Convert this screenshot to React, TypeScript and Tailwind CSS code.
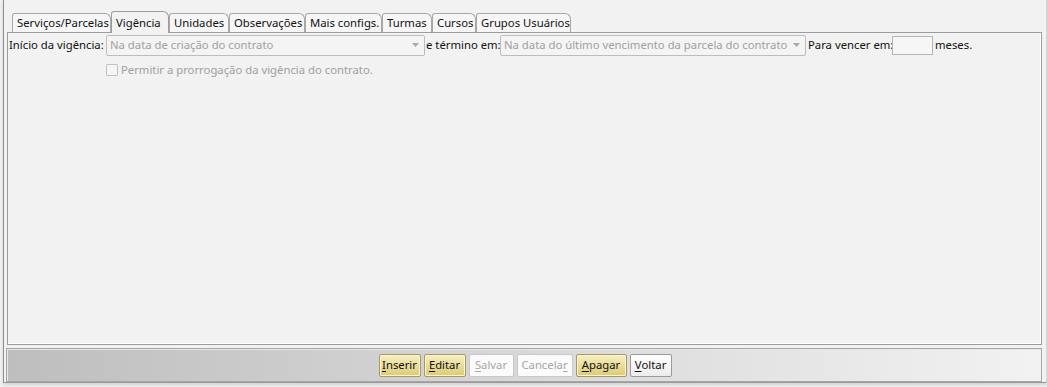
const tabs = [
  { t: "Serviços/Parcelas", w: "w-[99px]" },
  { t: "Vigência", w: "w-[58px]" },
  { t: "Unidades", w: "w-[60px]" },
  { t: "Observações", w: "w-[76px]" },
  { t: "Mais configs.", w: "w-[77px]" },
  { t: "Turmas", w: "w-[50px]" },
  { t: "Cursos", w: "w-[44px]" },
  { t: "Grupos Usuários", w: "w-[95px]" },
];

function Caret() {
  return (
    <svg width="7" height="4" viewBox="0 0 7 4" className="shrink-0">
      <path d="M0 0 L7 0 L3.5 4 Z" fill="#a8a8a8" />
    </svg>
  );
}

function Btn({ u, rest, pre = "", enabled, w }: { u: string; rest: string; pre?: string; enabled: boolean; w: string }) {
  return (
    <button
      className={
        (enabled
          ? "border-[#a8995a] bg-gradient-to-b from-[#f7efc0] to-[#dccb74] text-[#111111] shadow-[inset_0_0_0_1px_#fbf5d8]"
          : "border-[#c8c8c8] bg-[#fbfbfb] text-[#a6a6a6]") +
        " flex h-[23px] items-center justify-center rounded-[2px] border " +
        w
      }
    >
      {pre}
      <span className="underline underline-offset-2">{u}</span>
      {rest}
    </button>
  );
}

export default function App() {
  return (
    <div className="h-[387px] w-[1047px] bg-[#f0f0f0] font-['Noto_Sans',sans-serif] text-[11.3px] text-[#111111]">
      <div className="ml-[3px] flex h-[383px] flex-col border-b border-l border-r border-b-[#9a9a9a] border-l-[#8e8e8e] border-r-[#d6d6d6] bg-[#f2f2f2] pl-[3px] pr-[4px] shadow-[0_2px_3px_rgba(0,0,0,0.12)]">
        {/* tabs */}
        <div className="mt-[11px] flex h-[21px] items-end pl-[5px]">
          {tabs.map((tab, i) => (
            <div
              key={tab.t}
              className={
                (i === 1
                  ? "relative z-10 -mb-px h-[22px] border-[#9c9c9c] bg-[#f2f2f2]"
                  : "h-[19px] border-[#a8a8a8] bg-[#f6f6f6]") +
                " flex shrink-0 items-center whitespace-nowrap rounded-tl-[3px] rounded-tr-[6px] border border-b-0 pl-[4px] leading-none " +
                tab.w
              }
            >
              {tab.t}
            </div>
          ))}
        </div>
        {/* panel */}
        <div className="flex h-[313px] flex-col border border-[#9c9c9c] bg-[#f2f2f2] pl-[1px] pt-[2px] shadow-[inset_-1px_-1px_0_#ffffff]">
          <div className="flex h-[20px] items-center whitespace-nowrap">
            <span className="w-[97px] shrink-0">Início da vigência:</span>
            <div className="flex h-[21px] w-[319px] shrink-0 items-center justify-between rounded-[2px] border border-[#bdbdbd] bg-[#f4f4f4] pl-[3px] pr-[5px] text-[#a0a0a0]">
              <span>Na data de criação do contrato</span>
              <Caret />
            </div>
            <span className="w-[75px] shrink-0 pl-[1px]">e término em:</span>
            <div className="flex h-[21px] w-[306px] shrink-0 items-center justify-between rounded-[2px] border border-[#bdbdbd] bg-[#f4f4f4] pl-[3px] pr-[5px] text-[#a0a0a0]">
              <span>Na data do último vencimento da parcela do contrato</span>
              <Caret />
            </div>
            <span className="w-[86px] shrink-0 pl-[2px]">Para vencer em:</span>
            <div className="h-[19px] w-[41px] shrink-0 border border-[#b5b5b5] bg-[#f6f6f6]" />
            <span className="ml-[2px]">meses.</span>
          </div>
          <div className="mt-[7px] flex items-center pl-[97px] text-[#a0a0a0]">
            <div className="mr-[3px] h-[12px] w-[12px] rounded-[1px] border border-[#c2c2c2] bg-[#f6f6f6]" />
            <span>Permitir a prorrogação da vigência do contrato.</span>
          </div>
        </div>
        {/* footer */}
        <div className="-ml-px mt-[3px] flex h-[34px] items-center justify-center gap-[3px] border border-[#a6a6a6] bg-gradient-to-r from-[#bebebe] via-[#d8d8d8] to-[#f2f2f2] pl-[2px] shadow-[inset_1px_1px_0_#e8e8e8]">
          <Btn u="I" rest="nserir" enabled w="w-[42px]" />
          <Btn u="E" rest="ditar" enabled w="w-[42px]" />
          <Btn u="S" rest="alvar" enabled={false} w="w-[45px]" />
          <Btn pre="Cancela" u="r" rest="" enabled={false} w="w-[56px]" />
          <Btn u="A" rest="pagar" enabled w="w-[51px]" />
          <button className="flex h-[23px] w-[42px] items-center justify-center rounded-[2px] border border-[#9a9a9a] bg-gradient-to-b from-[#ffffff] to-[#ececec] text-[#111111]">
            <span className="underline underline-offset-2">V</span>oltar
          </button>
        </div>
      </div>
    </div>
  );
}
